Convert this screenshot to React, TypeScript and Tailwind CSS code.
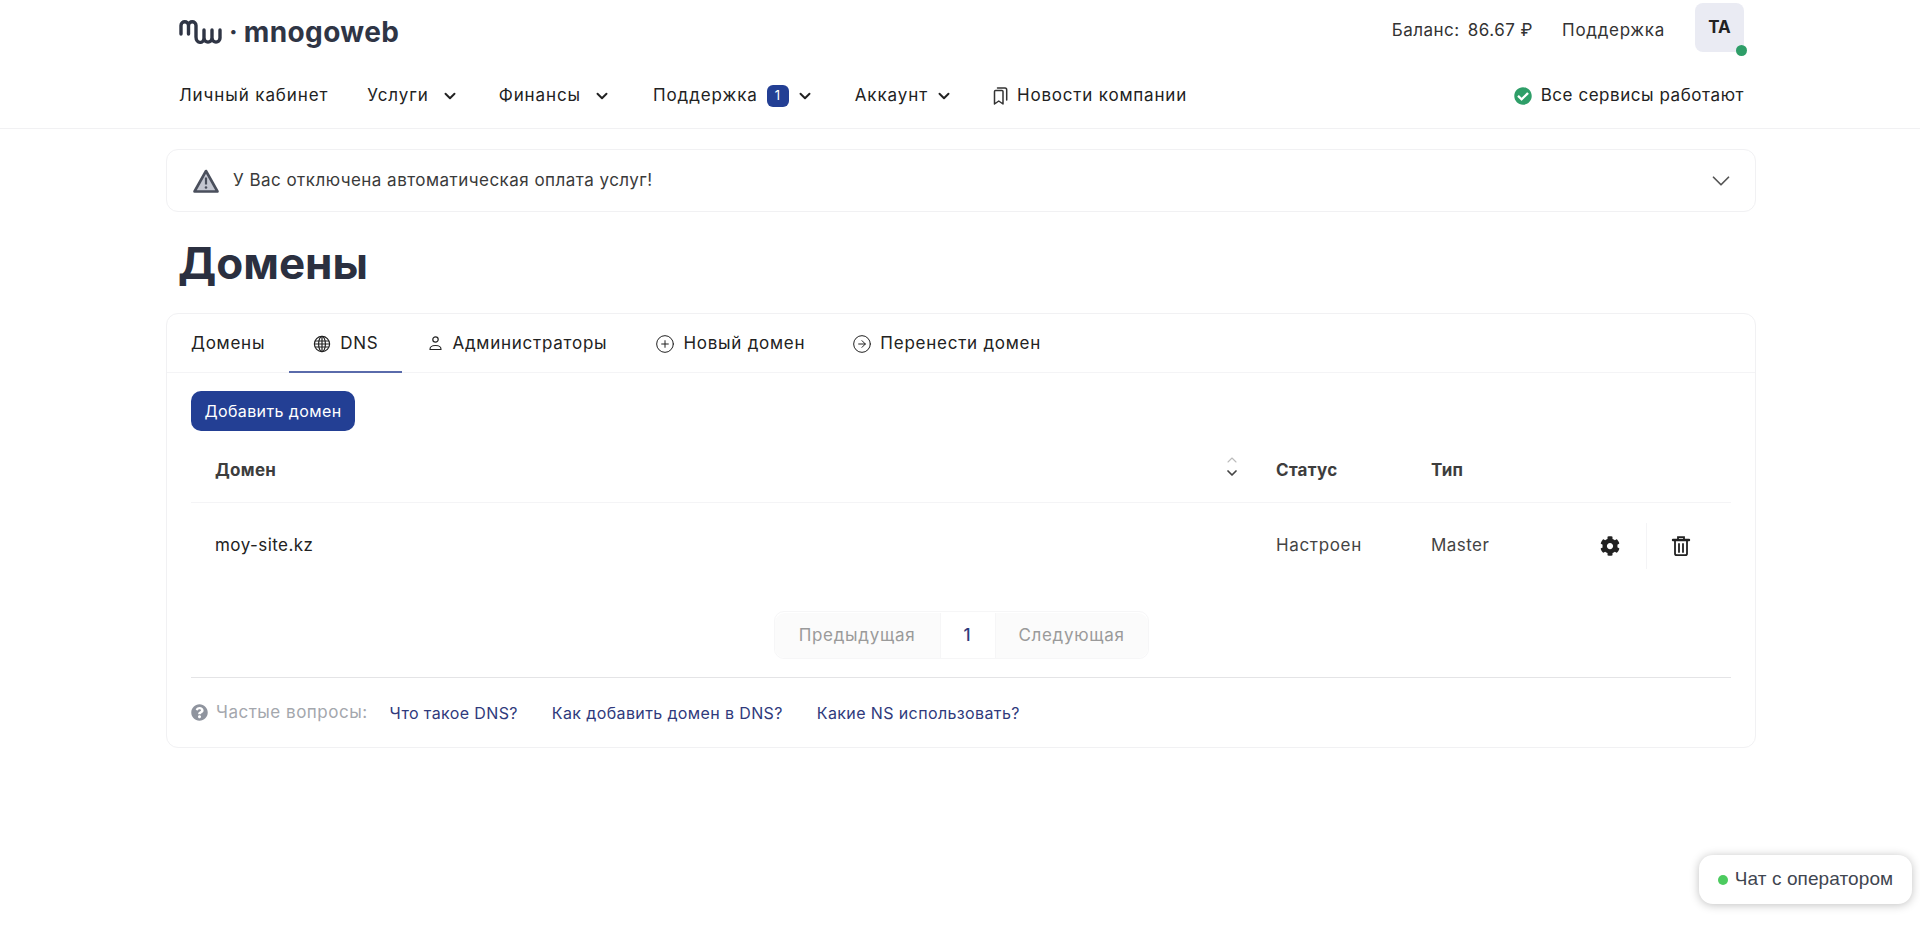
import { ChevronDown, ChevronUp, CirclePlus, CircleArrowRight } from 'lucide-react'
import { FaCheckCircle, FaCog, FaQuestionCircle } from 'react-icons/fa'

const navItems = [
  { label: 'Услуги', gap: 'ml-[39px]' },
  { label: 'Финансы', gap: 'ml-[40px]' },
]

function LogoMark() {
  return (
    <svg width="44" height="26" viewBox="0 0 44 26" fill="none" stroke="#2f3545" strokeWidth="3.4" strokeLinecap="round" strokeLinejoin="round">
      <path d="M2 15V6.500c0-5 7.500-5 7.500 0V15M9.500 6.500c0-5 7.500-5 7.500 0V18c0 7 8 7 8 1V11M25 19c0 5.500 8 5.500 8 0V11M33 19c0 5.500 8 5.500 8 0V11" />
    </svg>
  )
}

function AlertIcon() {
  return (
    <svg width="28" height="26" viewBox="0 0 28 26">
      <path d="M14 3 25.500 23.500H2.500Z" fill="#c3c6d0" stroke="#4a4f5c" strokeWidth="2.600" strokeLinejoin="round" />
      <path d="M14 9.500v7" stroke="#4a4f5c" strokeWidth="2.200" />
      <circle cx="14" cy="19.500" r="1.300" fill="#4a4f5c" />
    </svg>
  )
}

function BookmarksIcon() {
  return (
    <svg width="15" height="20" viewBox="0 0 15 20" fill="none" stroke="#333" strokeWidth="1.500" strokeLinejoin="round" strokeLinecap="round">
      <path d="M1.500 5.500c0-.6.4-1 1-1h6.500c.6 0 1 .4 1 1V18l-4.250-3L1.500 18Z" />
      <path d="M4.500 2h7.500c1 0 1.700.8 1.700 2v10" />
    </svg>
  )
}

function GlobeIcon() {
  return (
    <svg width="18" height="18" viewBox="0 0 18 18" fill="none" stroke="#222" strokeWidth="1.200" className="mr-[9px]">
      <circle cx="9" cy="9" r="7.600" />
      <ellipse cx="9" cy="9" rx="3.400" ry="7.600" />
      <path d="M9 1.400v15.200M2 6h14M1.400 9h15.200M2 12h14" />
    </svg>
  )
}

function PersonIcon() {
  return (
    <svg width="15" height="17" viewBox="0 0 15 17" fill="none" stroke="#222" strokeWidth="1.200">
      <circle cx="7.500" cy="4.500" r="2.700" />
      <path d="M2 14.500c0-1.800 0-4 5.500-4s5.500 2.200 5.500 4Z" strokeLinejoin="round" />
    </svg>
  )
}

function TrashIcon() {
  return (
    <svg width="20" height="22" viewBox="0 0 20 22" fill="none" stroke="#222" strokeWidth="1.800" strokeLinecap="round" className="block">
      <path d="M2 5h16" strokeWidth="2.400" />
      <path d="M7 4V2.200h6V4" />
      <path d="M4 6v12.500c0 1 .7 1.700 1.700 1.700h8.600c1 0 1.700-.7 1.700-1.700V6" />
      <path d="M8 9v8M12 9v8" />
    </svg>
  )
}

export default function App() {
  return (
    <div className="relative min-h-[927px] bg-white font-['Inter',sans-serif] text-[#222]">
      <header className="h-[129px] border-b border-[#f1f1f3]">
        <div className="mx-auto w-[1590px] pl-[14px] pr-[11px]">
          <div className="flex h-[55px] items-center justify-between">
            <div className="mt-[9px] flex items-center">
              <LogoMark />
              <span className="mx-[6px] text-[26px] font-bold leading-none text-[#2f3545]">·</span>
              <span className="text-[28px] font-bold leading-none tracking-[0.4px] text-[#2f3545]">mnogoweb</span>
            </div>
            <div className="flex items-center text-[17px] tracking-[0.5px] text-[#333]">
              <span className="mt-[7px]">Баланс:</span>
              <span className="ml-[8px] mt-[7px]">86.67 ₽</span>
              <span className="ml-[29px] mt-[7px] tracking-[0.7px]">Поддержка</span>
              <div className="relative ml-[30px] flex h-[49px] w-[49px] items-center justify-center rounded-[8px] bg-[#eaebf3] text-[17px] font-bold tracking-normal text-[#222]">
                TA
                <span className="absolute bottom-[-4px] right-[-3px] h-[11px] w-[11px] rounded-full bg-[#2e9e68]" />
              </div>
            </div>
          </div>
          <nav className="flex h-[73px] items-center pt-[9px] text-[17px] tracking-[0.9px]">
            <span>Личный кабинет</span>
            {navItems.map((item) => (
              <span key={item.label} className={`flex items-center ${item.gap}`}>
                {item.label}
                <ChevronDown size={18} strokeWidth={2.6} className="ml-[12px]" />
              </span>
            ))}
            <span className="ml-[42px] flex items-center">
              Поддержка
              <span className="ml-[9px] flex h-[22px] w-[22px] items-center justify-center rounded-[6px] bg-[#233f94] text-[13px] text-white">1</span>
              <ChevronDown size={18} strokeWidth={2.6} className="ml-[7px]" />
            </span>
            <span className="ml-[41px] flex items-center">
              Аккаунт
              <ChevronDown size={18} strokeWidth={2.6} className="ml-[7px]" />
            </span>
            <span className="ml-[40px] flex items-center tracking-[0.8px]">
              <BookmarksIcon />
              <span className="ml-[9px]">Новости компании</span>
            </span>
            <span className="ml-auto flex items-center tracking-[0.55px]">
              <FaCheckCircle size={18} className="mr-[9px] text-[#2e9e68]" />
              Все сервисы работают
            </span>
          </nav>
        </div>
      </header>

      <main className="mx-auto w-[1592px] pl-[2px] pt-[20px]">
        <div className="flex h-[63px] items-center justify-between rounded-[12px] border border-[#f1f1f3] pl-[25px] pr-[19px]">
          <div className="flex items-center text-[17px] tracking-[0.47px] text-[#3a3a3a]">
            <AlertIcon />
            <span className="ml-[13px]">У Вас отключена автоматическая оплата услуг!</span>
          </div>
          <ChevronDown size={30} strokeWidth={1.4} className="text-[#555]" />
        </div>

        <h1 className="mt-[21px] pl-[12px] text-[44px] font-bold leading-[60px] text-[#2b3040]">Домены</h1>

        <section className="mt-[20px] rounded-[12px] border border-[#f1f1f3]">
          <div className="flex h-[59px] items-center border-b border-[#f4f4f6] pl-[24px] pt-[1px] text-[17px] tracking-[0.75px]">
            <span>Домены</span>
            <span className="relative ml-[24px] flex h-full items-center px-[24px]">
              <GlobeIcon />
              DNS
              <span className="absolute bottom-[-1px] left-0 right-0 h-[2px] bg-[#5a6bab]" />
            </span>
            <span className="ml-[26px] flex items-center">
              <PersonIcon />
              <span className="ml-[9px]">Администраторы</span>
            </span>
            <span className="ml-[48px] flex items-center">
              <CirclePlus size={20} strokeWidth={1.2} className="mr-[8px]" />
              Новый домен
            </span>
            <span className="ml-[47px] flex items-center">
              <CircleArrowRight size={20} strokeWidth={1.2} className="mr-[8px]" />
              Перенести домен
            </span>
          </div>

          <div className="px-[24px] pt-[18px]">
            <button className="flex h-[40px] w-[164px] items-center justify-center rounded-[10px] bg-[#233f94] text-[16px] tracking-[0.4px] text-white">
              Добавить домен
            </button>

            <div className="flex h-[72px] items-center border-b border-[#f4f4f6] pt-[8px] text-[17px] font-bold tracking-[0.3px] text-[#3d3d3d]">
              <span className="ml-[24px] flex-1">Домен</span>
              <span className="mr-[36px] -mt-[8px] flex flex-col items-center text-[#444]">
                <ChevronUp size={16} strokeWidth={1.6} className="-mb-[3px] text-[#bbb]" />
                <ChevronDown size={16} strokeWidth={2.6} />
              </span>
              <span className="w-[155px]">Статус</span>
              <span className="w-[300px]">Тип</span>
            </div>

            <div className="flex h-[84px] items-center pt-[2px] text-[17px] tracking-[0.45px]">
              <span className="ml-[24px] flex-1">moy-site.kz</span>
              <span className="w-[155px] tracking-[0.65px] text-[#444]">Настроен</span>
              <span className="w-[169px] text-[#444]">Master</span>
              <div className="flex h-[46px] w-[131px] items-center">
                <span className="flex h-full w-[47px] items-center border-r border-[#f4f4f6]">
                  <FaCog size={20} className="text-[#222]" />
                </span>
                <span className="ml-[24px]">
                  <TrashIcon />
                </span>
              </div>
            </div>

            <div className="mt-[24px] flex justify-center">
              <div className="flex h-[48px] items-center rounded-[10px] border border-[#f6f6f7] pt-[1px] text-[17px] tracking-[0.7px] text-[#9a9a9a]">
                <span className="flex h-full w-[165px] items-center justify-center rounded-l-[10px] bg-[#fbfbfb]">Предыдущая</span>
                <span className="flex h-full w-[56px] items-center justify-center border-x border-[#f6f6f7] font-medium text-[#2f3a7c]">1</span>
                <span className="flex h-full w-[152px] items-center justify-center rounded-r-[10px] bg-[#fbfbfb]">Следующая</span>
              </div>
            </div>

            <div className="mt-[18px] flex h-[70px] items-center border-t border-[#e4e4e6] text-[16px] tracking-[0.38px]">
              <FaQuestionCircle size={17} className="text-[#8f949e]" />
              <span className="ml-[8px] text-[17px] tracking-[0.5px] text-[#a4a7ad]">Частые вопросы:</span>
              <a className="ml-[22px] text-[#2f3a7c]">Что такое DNS?</a>
              <a className="ml-[34px] text-[#2f3a7c]">Как добавить домен в DNS?</a>
              <a className="ml-[34px] text-[#2f3a7c]">Какие NS использовать?</a>
            </div>
          </div>
        </section>
      </main>

      <div className="absolute bottom-[23px] right-[8px] flex h-[49px] w-[213px] items-center justify-center rounded-[14px] bg-white font-['Liberation_Sans',sans-serif] text-[19px] tracking-[0.1px] text-[#3f4650] shadow-[0_1px_10px_rgba(0,0,0,0.25)]">
        <span className="mr-[7px] h-[10px] w-[10px] rounded-full bg-[#4ccb5f]" />
        Чат с оператором
      </div>
    </div>
  )
}
